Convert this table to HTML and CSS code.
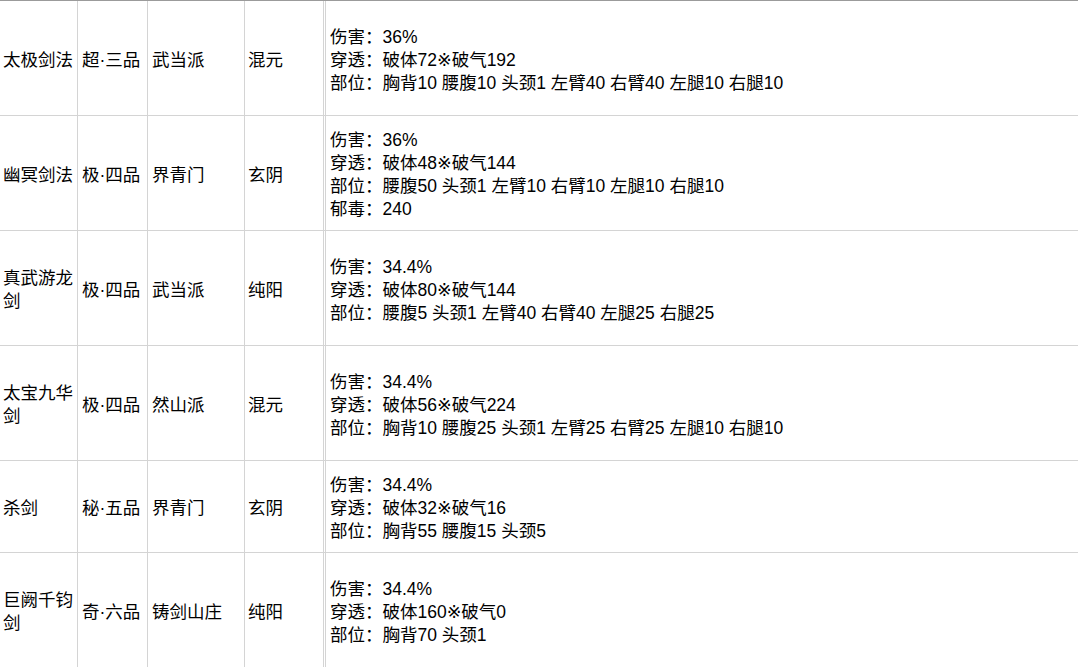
FILE: index.html
```html
<!DOCTYPE html>
<html lang="zh-CN">
<head>
<meta charset="utf-8">
<title>剑法</title>
<link rel="stylesheet" href="styles.css">
</head>
<body>
<table class="sheet">
  <colgroup>
    <col class="c-name">
    <col class="c-grade">
    <col class="c-sect">
    <col class="c-type">
    <col class="c-stats">
  </colgroup>
  <tbody>
    <tr>
      <td class="name">太极剑法</td>
      <td>超·三品</td>
      <td>武当派</td>
      <td class="type">混元</td>
      <td class="stats">
        <div>伤害：36%</div>
        <div>穿透：破体72※破气192</div>
        <div>部位：胸背10 腰腹10 头颈1 左臂40 右臂40 左腿10 右腿10</div>
      </td>
    </tr>
    <tr>
      <td class="name">幽冥剑法</td>
      <td>极·四品</td>
      <td>界青门</td>
      <td class="type">玄阴</td>
      <td class="stats">
        <div>伤害：36%</div>
        <div>穿透：破体48※破气144</div>
        <div>部位：腰腹50 头颈1 左臂10 右臂10 左腿10 右腿10</div>
        <div>郁毒：240</div>
      </td>
    </tr>
    <tr>
      <td class="name">真武游龙剑</td>
      <td>极·四品</td>
      <td>武当派</td>
      <td class="type">纯阳</td>
      <td class="stats">
        <div>伤害：34.4%</div>
        <div>穿透：破体80※破气144</div>
        <div>部位：腰腹5 头颈1 左臂40 右臂40 左腿25 右腿25</div>
      </td>
    </tr>
    <tr>
      <td class="name">太宝九华剑</td>
      <td>极·四品</td>
      <td>然山派</td>
      <td class="type">混元</td>
      <td class="stats">
        <div>伤害：34.4%</div>
        <div>穿透：破体56※破气224</div>
        <div>部位：胸背10 腰腹25 头颈1 左臂25 右臂25 左腿10 右腿10</div>
      </td>
    </tr>
    <tr class="short">
      <td class="name">杀剑</td>
      <td>秘·五品</td>
      <td>界青门</td>
      <td class="type">玄阴</td>
      <td class="stats">
        <div>伤害：34.4%</div>
        <div>穿透：破体32※破气16</div>
        <div>部位：胸背55 腰腹15 头颈5</div>
      </td>
    </tr>
    <tr>
      <td class="name">巨阙千钧剑</td>
      <td>奇·六品</td>
      <td>铸剑山庄</td>
      <td class="type">纯阳</td>
      <td class="stats">
        <div>伤害：34.4%</div>
        <div>穿透：破体160※破气0</div>
        <div>部位：胸背70 头颈1</div>
      </td>
    </tr>
  </tbody>
</table>
</body>
</html>
```

FILE: styles.css
```css
html, body {
  margin: 0;
  padding: 0;
  background: #ffffff;
  overflow: hidden;
}

.sheet {
  table-layout: fixed;
  border-collapse: separate;
  border-spacing: 0;
  width: 1078px;
  border-top: 1px solid #9b9b9b;
  font-family: "Liberation Sans", "DejaVu Sans", "Noto Sans CJK SC", sans-serif;
  font-size: 17.5px;
  line-height: 23px;
  color: #000000;
}

.c-name { width: 78px; }
.c-grade { width: 70px; }
.c-sect { width: 97px; }
.c-type { width: 81px; }
.c-stats { width: auto; }

.sheet td {
  box-sizing: border-box;
  height: 115px;
  padding: 4px 2px 0 4px;
  vertical-align: middle;
  border-right: 1px solid #d4d4d4;
  border-bottom: 1px solid #d4d4d4;
  white-space: normal;
  word-break: break-all;
}

.sheet tr.short td {
  height: 92px;
}

.sheet td.name {
  padding-left: 3px;
  padding-right: 1px;
}

.sheet td.type {
  padding-left: 3px;
  border-right: 3px double #d4d4d4;
}

.sheet td.stats {
  padding-left: 4px;
  padding-right: 0;
  border-right: none;
  white-space: nowrap;
}
```
